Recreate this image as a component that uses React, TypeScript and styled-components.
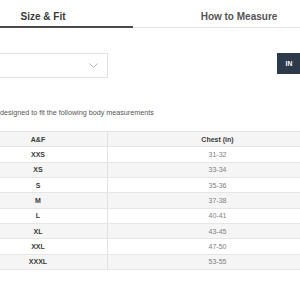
import styled, { createGlobalStyle } from 'styled-components';

const GlobalStyle = createGlobalStyle`
  html, body {
    margin: 0;
    padding: 0;
    background: #ffffff;
    overflow: hidden;
  }
  body {
    font-family: "Liberation Sans", Arial, sans-serif;
    color: #333;
  }
`;

const Page = styled.div`
  width: 400px;
  margin-left: -47px;
`;

const Tabs = styled.div`
  display: flex;
  gap: 2px;
  border-bottom: 1px solid #e4e4e4;
`;

const Tab = styled.button<{ $active?: boolean; $width: number }>`
  width: ${({ $width }) => $width}px;
  height: 28px;
  padding: 4px 0 0;
  border: none;
  background: transparent;
  font-family: inherit;
  font-size: 10px;
  font-weight: bold;
  color: ${({ $active }) => ($active ? '#3a3a3a' : '#555')};
  box-shadow: ${({ $active }) => ($active ? 'inset 0 -2px 0 #4a4a4a' : 'none')};
  margin-bottom: -1px;
`;

const Controls = styled.div`
  display: flex;
  align-items: flex-start;
  margin-top: 25px;
`;

const Select = styled.div`
  width: 155px;
  height: 25px;
  box-sizing: border-box;
  border: 1px solid #e2e2e2;
  display: flex;
  align-items: center;
  justify-content: flex-end;
  padding-right: 9px;
`;

const UnitButton = styled.button`
  margin-left: 169px;
  width: 24px;
  height: 21px;
  border: none;
  background: #2c3a4b;
  color: #ffffff;
  font-family: inherit;
  font-size: 6.8px;
  font-weight: bold;
  padding: 0;
  text-align: center;
`;

const Note = styled.p`
  margin: 30px 0 0 47px;
  font-size: 7.2px;
  line-height: 10px;
  color: #555;
  white-space: nowrap;
`;

const Table = styled.div`
  margin: 13px 0 0 16px;
  width: 358px;
  border-top: 1px solid #e6e6e6;
`;

const Row = styled.div<{ $shaded?: boolean }>`
  display: grid;
  grid-template-columns: 138px 220px;
  height: 15.33px;
  box-sizing: border-box;
  border-bottom: 1px solid #e6e6e6;
  background: ${({ $shaded }) => ($shaded ? '#f5f5f5' : '#ffffff')};
`;

const Cell = styled.div<{ $strong?: boolean }>`
  display: flex;
  align-items: center;
  justify-content: center;
  font-size: 7px;
  font-weight: ${({ $strong }) => ($strong ? 'bold' : 'normal')};
  color: ${({ $strong }) => ($strong ? '#3a3a3a' : '#808080')};
  & + & {
    border-left: 1px solid #e2e2e2;
  }
`;

const rows = [
  ['XXS', '31-32'],
  ['XS', '33-34'],
  ['S', '35-36'],
  ['M', '37-38'],
  ['L', '40-41'],
  ['XL', '43-45'],
  ['XXL', '47-50'],
  ['XXXL', '53-55'],
];

export default function App() {
  return (
    <Page>
      <GlobalStyle />
      <Tabs>
        <Tab $active $width={180}>Size &amp; Fit</Tab>
        <Tab $width={208}>How to Measure</Tab>
      </Tabs>
      <Controls>
        <Select>
          <svg width="9" height="5" viewBox="0 0 9 5" fill="none">
            <path d="M0.5 0.5 L4.5 4.5 L8.5 0.5" stroke="#a0a0a0" strokeWidth="0.8" />
          </svg>
        </Select>
        <UnitButton>IN</UnitButton>
      </Controls>
      <Note>designed to fit the following body measurements</Note>
      <Table>
        <Row $shaded>
          <Cell $strong>A&amp;F</Cell>
          <Cell $strong>Chest (in)</Cell>
        </Row>
        {rows.map(([size, chest], i) => (
          <Row key={size} $shaded={i % 2 === 1}>
            <Cell $strong>{size}</Cell>
            <Cell>{chest}</Cell>
          </Row>
        ))}
      </Table>
    </Page>
  );
}
